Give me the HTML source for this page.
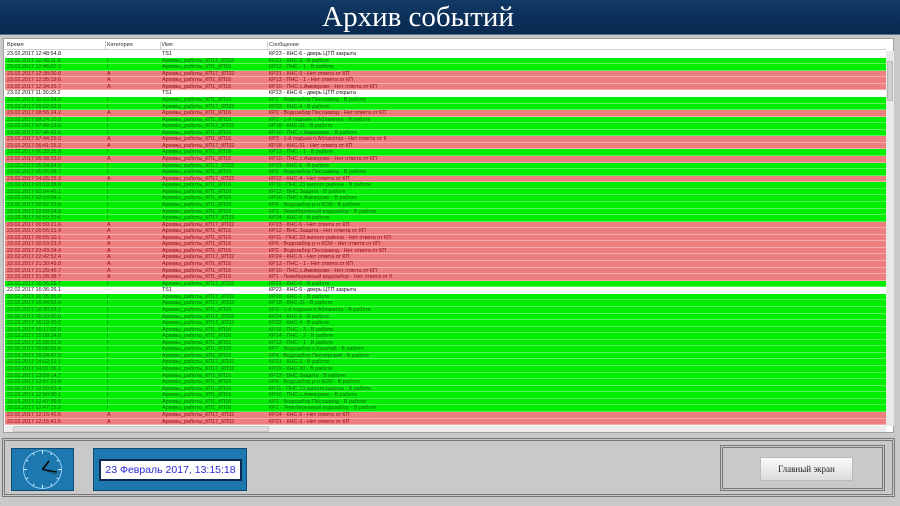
<!DOCTYPE html>
<html><head><meta charset="utf-8"><style>
*{margin:0;padding:0;box-sizing:border-box}
body{width:900px;height:506px;background:#c9c9c9;position:relative;overflow:hidden;font-family:"Liberation Sans",sans-serif}
#title{position:absolute;left:0;top:0;width:900px;height:35px;background:linear-gradient(#123a66,#0c2f58 60%,#0a2a50);border-bottom:1px solid #5a6f88}
#title div{position:absolute;left:0;width:836px;top:1px;text-align:center;color:#fff;font-family:"Liberation Serif",serif;font-size:29px;line-height:32px}
#grid{position:absolute;left:3px;top:38px;width:891px;height:395px;background:#fff;border:1px solid #a0a0a0}
#hdr{position:absolute;left:1px;top:1px;width:881px;height:10px;border-bottom:1px solid #d0d0d0;font-size:5.5px;color:#333}
#hdr span,.r span{position:absolute;top:0;white-space:nowrap}
#hdr span{line-height:10px}
#hdr i{position:absolute;top:1px;width:1px;height:8px;background:#ccc}
#rows{position:absolute;left:1px;top:12px;width:881px}
.r{position:relative;height:6.57px;font-size:5.4px;line-height:6.4px;border-bottom:0.5px solid rgba(255,255,255,.35)}
.r span:nth-child(1),#hdr span:nth-child(1){left:2px}
.r span:nth-child(2),#hdr span:nth-child(2){left:102px}
.r span:nth-child(3),#hdr span:nth-child(3){left:157px}
.r span:nth-child(4),#hdr span:nth-child(4){left:264px}
.w{background:#fff;color:#111}
.g{background:#00ee00;color:#0a6a0a}
.d{background:#ef7f7f;color:#8a1010}
#vs{position:absolute;left:882px;top:12px;width:8px;height:375px;background:#e8e8e8}
#vs b{position:absolute;left:1px;top:10px;width:6px;height:40px;background:#d0d0d0;border:1px solid #b8b8b8}
#hs{position:absolute;left:1px;top:387px;width:881px;height:6px;background:#ececec}
#hs b{position:absolute;left:8px;top:0;width:256px;height:6px;background:#dcdcdc;border:1px solid #c4c4c4}
#panel{position:absolute;left:2px;top:438px;width:893px;height:59px;border:3px double #777;background:#c9c9c9}
#clock{position:absolute;left:11px;top:448px;width:63px;height:43px;background:#1e78b0;border:1px solid #0f4d75}
#date{position:absolute;left:93px;top:448px;width:154px;height:43px;background:#1e78b0;border:1px solid #0f4d75}
#date div{position:absolute;left:5px;top:10px;width:143px;height:22px;background:#fff;border:2px solid #0a2a50;color:#2a2ad0;font-size:10.5px;line-height:18px;text-align:center;white-space:nowrap}
#btnf{position:absolute;left:720px;top:445px;width:165px;height:46px;border:3px double #777}
#btn{position:absolute;left:760px;top:457px;width:93px;height:24px;background:linear-gradient(#fafafa,#dcdcdc);border:1px solid #bbb;font-family:"Liberation Serif",serif;font-size:9px;line-height:22px;text-align:center;color:#222}
</style></head><body>
<div id="title"><div>Архив событий</div></div>
<div id="grid">
<div id="hdr"><span>Время</span><span>Категория</span><span>Имя</span><span>Сообщение</span><i style="left:100px"></i><i style="left:155px"></i><i style="left:262px"></i></div>
<div id="rows">
<div class="r w"><span>23.02.2017 12:48:54.8</span><span></span><span>TS1</span><span>КР23 - КНС-6 - дверь ЦТП закрыта</span></div>
<div class="r g"><span>23.02.2017 12:48:11.9</span><span>I</span><span>Архивы_работы_КП17_КП32</span><span>КР21 - КНС-3 - В работе</span></div>
<div class="r g"><span>23.02.2017 12:46:07.1</span><span>I</span><span>Архивы_работы_КП1_КП16</span><span>КР13 - ПНС - 1 - В работе</span></div>
<div class="r d"><span>23.02.2017 12:38:00.8</span><span>A</span><span>Архивы_работы_КП17_КП32</span><span>КР21 - КНС-3 - Нет ответа от КП</span></div>
<div class="r d"><span>23.02.2017 12:35:19.6</span><span>A</span><span>Архивы_работы_КП1_КП16</span><span>КР13 - ПНС - 1 - Нет ответа от КП</span></div>
<div class="r d"><span>23.02.2017 12:34:25.7</span><span>A</span><span>Архивы_работы_КП1_КП16</span><span>КР10 - ПНС с.Аммерово - Нет ответа от КП</span></div>
<div class="r w"><span>23.02.2017 11:30:29.2</span><span></span><span>TS1</span><span>КР23 - КНС-6 - дверь ЦТП открыта</span></div>
<div class="r g"><span>23.02.2017 10:03:34.8</span><span>I</span><span>Архивы_работы_КП1_КП16</span><span>КР2 - Водозабор Песозавод - В работе</span></div>
<div class="r g"><span>23.02.2017 09:02:02.0</span><span>I</span><span>Архивы_работы_КП17_КП32</span><span>КР22 - КНС-4 - В работе</span></div>
<div class="r d"><span>23.02.2017 08:56:24.2</span><span>A</span><span>Архивы_работы_КП1_КП16</span><span>КР2 - Водозабор Песозавод - Нет ответа от КП</span></div>
<div class="r g"><span>23.02.2017 08:24:10.8</span><span>I</span><span>Архивы_работы_КП1_КП16</span><span>КР3 - 1-й подъем п.Аблакетка - В работе</span></div>
<div class="r g"><span>23.02.2017 07:49:13.6</span><span>I</span><span>Архивы_работы_КП17_КП32</span><span>КР18 - КНС-31 - В работе</span></div>
<div class="r g"><span>23.02.2017 07:46:42.5</span><span>I</span><span>Архивы_работы_КП1_КП16</span><span>КР10 - ПНС с.Аммерово - В работе</span></div>
<div class="r d"><span>23.02.2017 07:44:25.0</span><span>A</span><span>Архивы_работы_КП1_КП16</span><span>КР3 - 1-й подъем п.Аблакетка - Нет ответа от К</span></div>
<div class="r d"><span>23.02.2017 06:41:15.2</span><span>A</span><span>Архивы_работы_КП17_КП32</span><span>КР18 - КНС-31 - Нет ответа от КП</span></div>
<div class="r g"><span>23.02.2017 06:39:25.8</span><span>I</span><span>Архивы_работы_КП1_КП16</span><span>КР13 - ПНС - 1 - В работе</span></div>
<div class="r d"><span>23.02.2017 06:38:33.0</span><span>A</span><span>Архивы_работы_КП1_КП16</span><span>КР10 - ПНС с.Аммерово - Нет ответа от КП</span></div>
<div class="r g"><span>23.02.2017 05:34:24.9</span><span>I</span><span>Архивы_работы_КП17_КП32</span><span>КР23 - КНС-6 - В работе</span></div>
<div class="r g"><span>23.02.2017 05:26:38.7</span><span>I</span><span>Архивы_работы_КП1_КП16</span><span>КР2 - Водозабор Песозавод - В работе</span></div>
<div class="r d"><span>23.02.2017 04:26:25.3</span><span>A</span><span>Архивы_работы_КП17_КП32</span><span>КР22 - КНС-4 - Нет ответа от КП</span></div>
<div class="r g"><span>23.02.2017 03:13:28.8</span><span>I</span><span>Архивы_работы_КП1_КП16</span><span>КР11 - ПНС 23 жилого района - В работе</span></div>
<div class="r g"><span>23.02.2017 02:04:46.1</span><span>I</span><span>Архивы_работы_КП1_КП16</span><span>КР12 - ВНС Защита - В работе</span></div>
<div class="r g"><span>23.02.2017 02:03:56.1</span><span>I</span><span>Архивы_работы_КП1_КП16</span><span>КР10 - ПНС с.Аммерово - В работе</span></div>
<div class="r g"><span>23.02.2017 02:02:23.5</span><span>I</span><span>Архивы_работы_КП1_КП16</span><span>КР6 - Водозабор р-н КСМ - В работе</span></div>
<div class="r g"><span>23.02.2017 02:00:04.8</span><span>I</span><span>Архивы_работы_КП1_КП16</span><span>КР1 - Левобережный водозабор - В работе</span></div>
<div class="r g"><span>23.02.2017 00:59:30.6</span><span>I</span><span>Архивы_работы_КП17_КП32</span><span>КР24 - КНС-5 - В работе</span></div>
<div class="r d"><span>23.02.2017 00:59:21.6</span><span>A</span><span>Архивы_работы_КП17_КП32</span><span>КР23 - КНС-6 - Нет ответа от КП</span></div>
<div class="r d"><span>23.02.2017 00:55:31.4</span><span>A</span><span>Архивы_работы_КП1_КП16</span><span>КР12 - ВНС Защита - Нет ответа от КП</span></div>
<div class="r d"><span>23.02.2017 00:55:10.1</span><span>A</span><span>Архивы_работы_КП1_КП16</span><span>КР11 - ПНС 23 жилого района - Нет ответа от КП</span></div>
<div class="r d"><span>23.02.2017 00:53:23.3</span><span>A</span><span>Архивы_работы_КП1_КП16</span><span>КР6 - Водозабор р-н КСМ - Нет ответа от КП</span></div>
<div class="r d"><span>22.02.2017 23:43:34.4</span><span>A</span><span>Архивы_работы_КП1_КП16</span><span>КР2 - Водозабор Песозавод - Нет ответа от КП</span></div>
<div class="r d"><span>22.02.2017 22:42:52.4</span><span>A</span><span>Архивы_работы_КП17_КП32</span><span>КР24 - КНС-5 - Нет ответа от КП</span></div>
<div class="r d"><span>22.02.2017 21:30:49.8</span><span>A</span><span>Архивы_работы_КП1_КП16</span><span>КР13 - ПНС - 1 - Нет ответа от КП</span></div>
<div class="r d"><span>22.02.2017 21:29:45.7</span><span>A</span><span>Архивы_работы_КП1_КП16</span><span>КР10 - ПНС с.Аммерово - Нет ответа от КП</span></div>
<div class="r d"><span>22.02.2017 21:26:38.7</span><span>A</span><span>Архивы_работы_КП1_КП16</span><span>КР1 - Левобережный водозабор - Нет ответа от К</span></div>
<div class="r g"><span>22.02.2017 16:36:26.7</span><span>I</span><span>Архивы_работы_КП17_КП32</span><span>КР23 - КНС-6 - В работе</span></div>
<div class="r w"><span>22.02.2017 16:36:26.1</span><span></span><span>TS1</span><span>КР23 - КНС-6 - дверь ЦТП закрыта</span></div>
<div class="r g"><span>22.02.2017 16:35:35.0</span><span>I</span><span>Архивы_работы_КП17_КП32</span><span>КР20 - КНС-1 - В работе</span></div>
<div class="r g"><span>22.02.2017 16:34:52.6</span><span>I</span><span>Архивы_работы_КП17_КП32</span><span>КР18 - КНС-31 - В работе</span></div>
<div class="r g"><span>22.02.2017 16:30:23.1</span><span>I</span><span>Архивы_работы_КП1_КП16</span><span>КР3 - 1-й подъем п.Аблакетка - В работе</span></div>
<div class="r g"><span>22.02.2017 16:20:00.0</span><span>I</span><span>Архивы_работы_КП17_КП32</span><span>КР24 - КНС-5 - В работе</span></div>
<div class="r g"><span>22.02.2017 16:19:20.2</span><span>I</span><span>Архивы_работы_КП17_КП32</span><span>КР22 - КНС-4 - В работе</span></div>
<div class="r g"><span>22.02.2017 16:17:02.6</span><span>I</span><span>Архивы_работы_КП1_КП16</span><span>КР15 - ПНС - 3 - В работе</span></div>
<div class="r g"><span>22.02.2017 15:08:14.8</span><span>I</span><span>Архивы_работы_КП1_КП16</span><span>КР14 - ПНС - 2 - В работе</span></div>
<div class="r g"><span>22.02.2017 15:08:01.9</span><span>I</span><span>Архивы_работы_КП1_КП16</span><span>КР13 - ПНС - 1 - В работе</span></div>
<div class="r g"><span>22.02.2017 15:06:02.8</span><span>I</span><span>Архивы_работы_КП1_КП16</span><span>КР7 - Водозабор с.Казачий - В работе</span></div>
<div class="r g"><span>22.02.2017 15:04:47.0</span><span>I</span><span>Архивы_работы_КП1_КП16</span><span>КР4 - Водозабор Пионерский - В работе</span></div>
<div class="r g"><span>22.02.2017 14:02:21.1</span><span>I</span><span>Архивы_работы_КП17_КП32</span><span>КР21 - КНС-3 - В работе</span></div>
<div class="r g"><span>22.02.2017 14:01:35.1</span><span>I</span><span>Архивы_работы_КП17_КП32</span><span>КР19 - КНС-30 - В работе</span></div>
<div class="r g"><span>22.02.2017 13:59:14.7</span><span>I</span><span>Архивы_работы_КП1_КП16</span><span>КР12 - ВНС Защита - В работе</span></div>
<div class="r g"><span>22.02.2017 13:57:21.8</span><span>I</span><span>Архивы_работы_КП1_КП16</span><span>КР6 - Водозабор р-н КСМ - В работе</span></div>
<div class="r g"><span>22.02.2017 12:50:50.4</span><span>I</span><span>Архивы_работы_КП1_КП16</span><span>КР11 - ПНС 23 жилого района - В работе</span></div>
<div class="r g"><span>22.02.2017 12:50:30.1</span><span>I</span><span>Архивы_работы_КП1_КП16</span><span>КР10 - ПНС с.Аммерово - В работе</span></div>
<div class="r g"><span>22.02.2017 12:47:39.5</span><span>I</span><span>Архивы_работы_КП1_КП16</span><span>КР2 - Водозабор Песозавод - В работе</span></div>
<div class="r g"><span>22.02.2017 12:47:15.9</span><span>I</span><span>Архивы_работы_КП1_КП16</span><span>КР1 - Левобережный водозабор - В работе</span></div>
<div class="r d"><span>22.02.2017 12:16:45.5</span><span>A</span><span>Архивы_работы_КП17_КП32</span><span>КР24 - КНС-5 - Нет ответа от КП</span></div>
<div class="r d"><span>22.02.2017 12:15:41.5</span><span>A</span><span>Архивы_работы_КП17_КП32</span><span>КР21 - КНС-3 - Нет ответа от КП</span></div>
</div>
<div id="vs"><b></b></div>
<div id="hs"><b></b></div>
</div>
<div id="panel"></div>
<div id="clock"><svg width="61" height="41" viewBox="0 0 61 41">
<circle cx="30.5" cy="20.5" r="19" fill="none" stroke="#a8dcff" stroke-width="0.8"/>
<g stroke="#d8f0ff" stroke-width="1">
<line x1="30.5" y1="1.5" x2="30.5" y2="5"/><line x1="30.5" y1="36" x2="30.5" y2="39.5"/>
<line x1="11.5" y1="20.5" x2="15" y2="20.5"/><line x1="46" y1="20.5" x2="49.5" y2="20.5"/>
<line x1="40" y1="4" x2="38.8" y2="6.1"/><line x1="46.9" y1="11" x2="44.8" y2="12.2"/>
<line x1="46.9" y1="30" x2="44.8" y2="28.8"/><line x1="40" y1="37" x2="38.8" y2="34.9"/>
<line x1="21" y1="37" x2="22.2" y2="34.9"/><line x1="14.1" y1="30" x2="16.2" y2="28.8"/>
<line x1="14.1" y1="11" x2="16.2" y2="12.2"/><line x1="21" y1="4" x2="22.2" y2="6.1"/>
</g>
<line x1="30.5" y1="20.5" x2="37" y2="12" stroke="#000" stroke-width="1.6"/>
<line x1="30.5" y1="20.5" x2="45" y2="23" stroke="#000" stroke-width="1.2"/>
<line x1="30.5" y1="20.5" x2="44" y2="25" stroke="#111" stroke-width="0.5"/>
</svg></div>
<div id="date"><div>23 Февраль 2017, 13:15:18</div></div>
<div id="btnf"></div>
<div id="btn">Главный экран</div>
</body></html>
